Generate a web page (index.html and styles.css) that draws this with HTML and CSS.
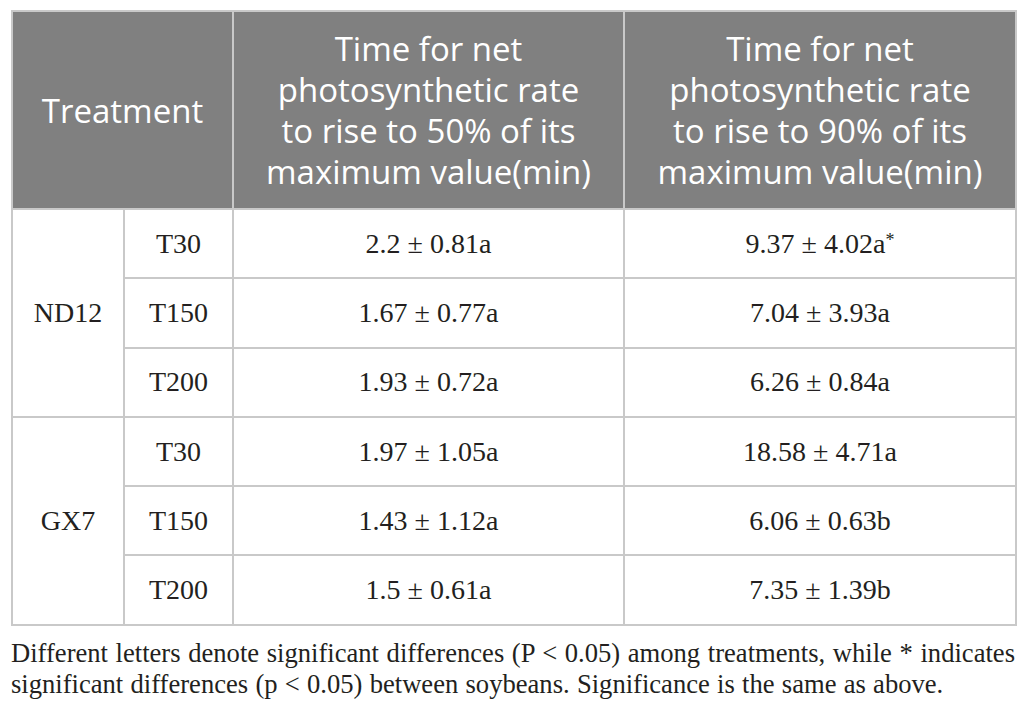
FILE: index.html
```html
<!DOCTYPE html>
<html lang="en">
<head>
<meta charset="utf-8">
<title>Table</title>
<link rel="stylesheet" href="styles.css">
</head>
<body>
<div class="wrap">
<table class="data">
  <colgroup>
    <col class="c1"><col class="c2"><col class="c3"><col class="c4">
  </colgroup>
  <thead>
    <tr>
      <th colspan="2">Treatment</th>
      <th>Time for net<br>photosynthetic rate<br>to rise to 50% of its<br>maximum value(min)</th>
      <th>Time for net<br>photosynthetic rate<br>to rise to 90% of its<br>maximum value(min)</th>
    </tr>
  </thead>
  <tbody>
    <tr><td rowspan="3">ND12</td><td>T30</td><td>2.2 ± 0.81a</td><td>9.37 ± 4.02a<span class="sup">*</span></td></tr>
    <tr><td>T150</td><td>1.67 ± 0.77a</td><td>7.04 ± 3.93a</td></tr>
    <tr><td>T200</td><td>1.93 ± 0.72a</td><td>6.26 ± 0.84a</td></tr>
    <tr><td rowspan="3">GX7</td><td>T30</td><td>1.97 ± 1.05a</td><td>18.58 ± 4.71a</td></tr>
    <tr><td>T150</td><td>1.43 ± 1.12a</td><td>6.06 ± 0.63b</td></tr>
    <tr><td>T200</td><td>1.5 ± 0.61a</td><td>7.35 ± 1.39b</td></tr>
  </tbody>
</table>
<p class="note"><span class="line1">Different letters denote significant differences (P &lt; 0.05) among treatments, while * indicates</span> <span class="line2">significant differences (p &lt; 0.05) between soybeans. Significance is the same as above.</span></p>
</div>
</body>
</html>
```
FILE: styles.css
```css
html, body {
  margin: 0;
  padding: 0;
  background: #ffffff;
}
.wrap {
  padding: 10px 0 0 11px;
  width: 1004px;
}
.data {
  border-collapse: collapse;
  width: 1004px;
  table-layout: fixed;
  font-family: "Liberation Serif", "Times New Roman", serif;
  color: #231f20;
}
.c1 { width: 112px; }
.c2 { width: 109px; }
.c3 { width: 391px; }
.c4 { width: 392px; }
.data th {
  background: #808080;
  color: #ffffff;
  font-family: "Open Sans", "Noto Sans", sans-serif;
  font-weight: 400;
  font-size: 33px;
  line-height: 41px;
  height: 196px;
  padding: 0;
  border: 2px solid #c9c9c9;
  text-align: center;
  vertical-align: middle;
}
.data td {
  font-size: 28px;
  height: 67.3px;
  padding: 0;
  text-align: center;
  vertical-align: middle;
  border: 2px solid #c9c9c9;
}
.sup {
  font-size: 18px;
  vertical-align: 7px;
  line-height: 0;
}
.note {
  margin: 12px 0 0 0;
  font-family: "Liberation Serif", "Times New Roman", serif;
  font-size: 26.6px;
  line-height: 31px;
  color: #231f20;
}
.line1 {
  display: block;
  text-align: justify;
  text-align-last: justify;
}
.line2 {
  display: block;
  text-align: left;
  word-spacing: 0.6px;
}
```
